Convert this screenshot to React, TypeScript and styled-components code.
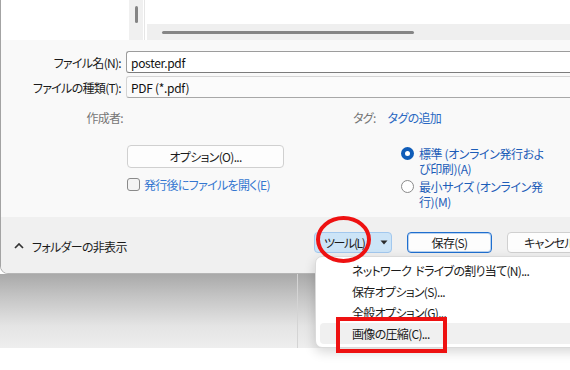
import React from "react";
import styled, { createGlobalStyle } from "styled-components";

const GlobalStyle = createGlobalStyle`
  html, body { margin: 0; padding: 0; background: #ffffff; }
  body {
    font-family: "Noto Sans CJK JP", "Noto Sans", sans-serif;
    font-size: 12px;
    font-feature-settings: "palt";
    letter-spacing: -0.7px;
    color: #1b1b1b;
  }
`;

const Page = styled.div`
  width: 570px;
  height: 370px;
  overflow: hidden;
  position: relative;
  display: flex;
  flex-direction: column;
  background: #ffffff;
`;

const Dialog = styled.div`
  width: 640px;
  flex: none;
  display: flex;
  flex-direction: column;
  border-left: 1px solid #a3a3a3;
  border-bottom: 1px solid #b5b5b5;
  border-bottom-left-radius: 8px;
  overflow: hidden;
  position: relative;
  z-index: 1;
`;

const Browser = styled.div`
  height: 40px;
  display: flex;
  background: #ffffff;
`;

const LeftPane = styled.div`
  width: 128px;
`;

const VScroll = styled.div`
  width: 14px;
  background: #f0f0f0;
  display: flex;
  justify-content: center;
  padding-top: 6px;
  box-sizing: border-box;
`;

const VThumb = styled.div`
  width: 3px;
  height: 17px;
  border-radius: 2px;
  background: #858585;
`;

const Splitter = styled.div`
  width: 4px;
  background: linear-gradient(to right, #fff 1px, #e6e6e6 1px, #e6e6e6 2px, #fff 2px);
`;

const RightPane = styled.div`
  flex: 1;
  display: flex;
  flex-direction: column;
  justify-content: flex-end;
`;

const HScroll = styled.div`
  height: 16px;
  background: #efefef;
  display: flex;
  align-items: center;
  padding-left: 15px;
`;

const HThumb = styled.div`
  width: 252px;
  height: 3px;
  border-radius: 2px;
  background: #858585;
`;

const FormPanel = styled.div`
  height: 177px;
  box-sizing: border-box;
  background: #f9f9f9;
  padding-top: 11px;
  display: flex;
  flex-direction: column;
`;

const FieldGrid = styled.div`
  display: grid;
  grid-template-columns: 120px 1fr;
  column-gap: 5px;
  row-gap: 3px;
  align-items: center;
`;

const FieldLabel = styled.div`
  text-align: right;
  white-space: nowrap;
  color: #1b1b1b;
`;

const Field = styled.div<{ $select?: boolean }>`
  height: 22px;
  box-sizing: border-box;
  display: flex;
  align-items: center;
  padding-left: 4px;
  border-radius: 3px 0 0 3px;
  letter-spacing: -0.3px;
  background: ${(p) => (p.$select ? "#fbfbfb" : "#ffffff")};
  border: 1px solid ${(p) => (p.$select ? "#d4d4d4" : "#9c9c9c")};
  border-right: none;
  border-bottom-color: ${(p) => (p.$select ? "#a8a8a8" : "#7c7c7c")};
  color: #111;
`;

const MetaRow = styled.div`
  margin-top: 11px;
  height: 16px;
  display: flex;
  align-items: center;
`;

const MetaLabel = styled.span<{ $width?: number }>`
  color: #767676;
  white-space: nowrap;
  text-align: right;
  width: ${(p) => (p.$width ? `${p.$width}px` : "auto")};
`;

const TagGroup = styled.div`
  margin-left: 230px;
  display: flex;
  gap: 12px;
`;

const LinkText = styled.span`
  color: #2a68c2;
`;

const OptionsArea = styled.div`
  margin-top: 20px;
  padding-left: 126px;
  display: flex;
`;

const LeftCol = styled.div`
  width: 157px;
  display: flex;
  flex-direction: column;
`;

const OptionsButton = styled.div`
  height: 23px;
  box-sizing: border-box;
  border: 1px solid #d0d0d0;
  border-radius: 4px;
  background: #fdfdfd;
  display: flex;
  align-items: center;
  justify-content: center;
  color: #1b1b1b;
`;

const CheckRow = styled.div`
  margin-top: 8px;
  height: 16px;
  display: flex;
  align-items: center;
  gap: 4px;
  white-space: nowrap;
`;

const CheckBox = styled.span`
  width: 13px;
  height: 13px;
  box-sizing: border-box;
  border: 1px solid #8a8a8a;
  border-radius: 3px;
  background: #f4f4f4;
  flex: none;
`;

const CheckLabel = styled.span`
  color: #3577d0;
`;

const RightCol = styled.div`
  margin-left: 117px;
  display: flex;
  flex-direction: column;
  gap: 3px;
  margin-top: 1px;
`;

const RadioRow = styled.div`
  display: flex;
  align-items: flex-start;
  gap: 5px;
`;

const Radio = styled.span<{ $checked?: boolean }>`
  width: 13px;
  height: 13px;
  box-sizing: border-box;
  border-radius: 50%;
  flex: none;
  margin-top: 1px;
  background: ${(p) => (p.$checked ? "#0f5cb8" : "#ffffff")};
  border: ${(p) => (p.$checked ? "none" : "1px solid #8a8a8a")};
  display: flex;
  align-items: center;
  justify-content: center;
  &::after {
    content: "";
    width: 5px;
    height: 5px;
    border-radius: 50%;
    background: #ffffff;
    display: ${(p) => (p.$checked ? "block" : "none")};
  }
`;

const RadioText = styled.span`
  display: flex;
  flex-direction: column;
  color: #1d5db8;
  white-space: nowrap;
  letter-spacing: -0.4px;
`;

const RadioLine = styled.span`
  height: 15px;
  line-height: 15px;
`;

const BottomBar = styled.div`
  height: 56px;
  background: #f0f0f0;
  display: flex;
  align-items: flex-start;
  padding-left: 13px;
`;

const FolderToggle = styled.div`
  flex: 0 0 300px;
  display: flex;
  align-items: center;
  gap: 8px;
  margin-top: 21px;
  height: 16px;
  color: #1b1b1b;
`;

const ButtonRow = styled.div`
  display: flex;
  gap: 15px;
  margin-top: 15px;
`;

const BaseButton = styled.div`
  height: 21px;
  box-sizing: border-box;
  border-radius: 4px;
  display: flex;
  align-items: center;
  white-space: nowrap;
  color: #1b1b1b;
`;

const ToolButton = styled(BaseButton)`
  width: 78px;
  background: #cce4f7;
  border: 1px solid #a2c8ee;
  padding: 0 3px 0 9px;
  justify-content: space-between;
  letter-spacing: -1.4px;
`;

const PushButton = styled(BaseButton)<{ $primary?: boolean }>`
  width: 85px;
  justify-content: center;
  background: #fdfdfd;
  border: 1px solid ${(p) => (p.$primary ? "#1f6fcf" : "#d0d0d0")};
  box-shadow: ${(p) => (p.$primary ? "inset 0 0 0 1px rgba(31,111,207,0.3)" : "none")};
`;

const Backdrop = styled.div`
  height: 74px;
  flex: none;
  display: flex;
  background: linear-gradient(to bottom, #a9a9a9 0%, #c4c4c4 30%, #e4e4e4 70%, #eeeeee 100%);
`;

const BackdropLeft = styled.div`
  width: 297px;
  border-right: 1px solid #d4d4d4;
`;

const Menu = styled.div`
  position: absolute;
  left: 315px;
  top: 256px;
  width: 290px;
  box-sizing: border-box;
  background: #ffffff;
  border: 1px solid #dadada;
  border-radius: 7px;
  box-shadow: 0 4px 12px rgba(0, 0, 0, 0.16);
  padding: 3px 4px;
  z-index: 2;
`;

const MenuItem = styled.div<{ $active?: boolean }>`
  height: 21px;
  display: flex;
  align-items: center;
  padding-left: 32px;
  border-radius: 4px;
  white-space: pre;
  color: #1b1b1b;
  background: ${(p) => (p.$active ? "#f0f0f0" : "transparent")};
`;

const RedCircle = styled.div`
  position: absolute;
  left: 316px;
  top: 216px;
  width: 55px;
  height: 47px;
  box-sizing: border-box;
  border: 4px solid #ee1111;
  border-radius: 50%;
  z-index: 3;
`;

const RedRect = styled.div`
  position: absolute;
  left: 336px;
  top: 317px;
  width: 111px;
  height: 36px;
  box-sizing: border-box;
  border: 4px solid #ee1111;
  z-index: 3;
`;

const ChevronUp = () => (
  <svg width="10" height="6" viewBox="0 0 10 6">
    <polyline points="1,5 5,1 9,5" fill="none" stroke="#333" strokeWidth="1.7" />
  </svg>
);

const Caret = () => (
  <svg width="8" height="5" viewBox="0 0 8 5">
    <polygon points="0.5,0.5 7.5,0.5 4,4.5" fill="#2b2b2b" />
  </svg>
);

export default function App() {
  return (
    <Page>
      <GlobalStyle />
      <Dialog>
        <Browser>
          <LeftPane />
          <VScroll>
            <VThumb />
          </VScroll>
          <Splitter />
          <RightPane>
            <HScroll>
              <HThumb />
            </HScroll>
          </RightPane>
        </Browser>
        <FormPanel>
          <FieldGrid>
            <FieldLabel>ファイル名(N):</FieldLabel>
            <Field>poster.pdf</Field>
            <FieldLabel>ファイルの種類(T):</FieldLabel>
            <Field $select>PDF (*.pdf)</Field>
          </FieldGrid>
          <MetaRow>
            <MetaLabel $width={122}>作成者:</MetaLabel>
            <TagGroup>
              <MetaLabel>タグ:</MetaLabel>
              <LinkText>タグの追加</LinkText>
            </TagGroup>
          </MetaRow>
          <OptionsArea>
            <LeftCol>
              <OptionsButton>オプション(O)...</OptionsButton>
              <CheckRow>
                <CheckBox />
                <CheckLabel>発行後にファイルを開く(E)</CheckLabel>
              </CheckRow>
            </LeftCol>
            <RightCol>
              <RadioRow>
                <Radio $checked />
                <RadioText>
                  <RadioLine>標準 (オンライン発行およ</RadioLine>
                  <RadioLine>び印刷)(A)</RadioLine>
                </RadioText>
              </RadioRow>
              <RadioRow>
                <Radio />
                <RadioText>
                  <RadioLine>最小サイズ (オンライン発</RadioLine>
                  <RadioLine>行)(M)</RadioLine>
                </RadioText>
              </RadioRow>
            </RightCol>
          </OptionsArea>
        </FormPanel>
        <BottomBar>
          <FolderToggle>
            <ChevronUp />
            <span>フォルダーの非表示</span>
          </FolderToggle>
          <ButtonRow>
            <ToolButton>
              <span>ツール(L)</span>
              <Caret />
            </ToolButton>
            <PushButton $primary>保存(S)</PushButton>
            <PushButton>キャンセル</PushButton>
          </ButtonRow>
        </BottomBar>
      </Dialog>
      <Backdrop>
        <BackdropLeft />
      </Backdrop>
      <Menu>
        <MenuItem>ネットワーク  ドライブの割り当て(N)...</MenuItem>
        <MenuItem>保存オプション(S)...</MenuItem>
        <MenuItem>全般オプション(G)...</MenuItem>
        <MenuItem $active>画像の圧縮(C)...</MenuItem>
      </Menu>
      <RedCircle />
      <RedRect />
    </Page>
  );
}
